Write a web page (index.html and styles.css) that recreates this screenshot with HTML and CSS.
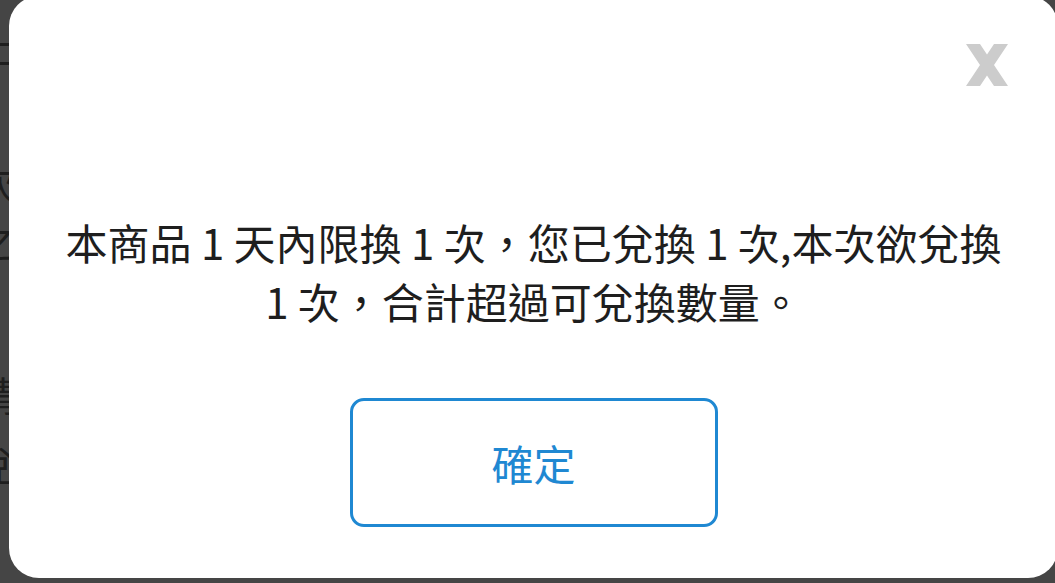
FILE: index.html
```html
<!DOCTYPE html>
<html lang="zh-Hant">
<head>
  <meta charset="UTF-8">
  <meta name="viewport" content="width=device-width, initial-scale=1.0">
  <title>兌換提示</title>
  <link rel="stylesheet" href="styles.css">
</head>
<body>
  <!-- page behind the dimmed overlay -->
  <div class="page">
    <p class="row-1">止</p>
    <p class="row-2">次</p>
    <p class="row-3">之</p>
    <p class="row-4">請</p>
    <p class="row-5">兌</p>
  </div>

  <div class="overlay">
    <div class="modal">
      <button class="close-btn" aria-label="關閉">
        <svg width="42" height="42" viewBox="0 0 42 42">
          <polygon points="0,0 14,0 21,10.5 28,0 42,0 28,21 42,42 28,42 21,31.5 14,42 0,42 14,21" fill="#cccccc"/>
        </svg>
      </button>
      <p class="message">本商品 1 天內限換 1 次，您已兌換 1 次,本次欲兌換 1 次，合計超過可兌換數量。</p>
      <button class="confirm-btn">確定</button>
    </div>
  </div>
</body>
</html>
```

FILE: styles.css
```css
html, body {
  height: 100%;
}
body {
  margin: 0;
  background-color: #454545;
  font-family: "Noto Sans CJK TC", "Noto Sans", sans-serif;
  overflow: hidden;
}
.page {
  margin-left: -24px;
  color: #1e1e1e;
  font-size: 40px;
  line-height: 1;
}
.page p {
  margin: 0;
}
.page .row-1 {
  padding-top: 26px;
}
.page .row-2 {
  margin-top: 96px;
}
.page .row-3 {
  margin-top: 18px;
}
.page .row-4 {
  margin-top: 114px;
}
.page .row-5 {
  margin-top: 30px;
}
.overlay {
  position: absolute;
  inset: 0;
}
.modal {
  position: absolute;
  left: 9px;
  top: -4px;
  width: 1049px;
  height: 582px;
  box-sizing: border-box;
  background-color: #ffffff;
  border-radius: 30px;
  display: flex;
  flex-direction: column;
  align-items: center;
  padding: 48px 50px 0;
}
.close-btn {
  align-self: flex-end;
  background: none;
  border: none;
  padding: 0;
  width: 42px;
  height: 42px;
  cursor: pointer;
}
.close-btn svg {
  display: block;
}
.message {
  margin: 126px 0 0;
  max-width: 949px;
  text-align: center;
  font-size: 42px;
  line-height: 59px;
  color: #1e1e1e;
}
.confirm-btn {
  margin-top: 68px;
  width: 368px;
  height: 129px;
  background-color: #ffffff;
  border: 3px solid #1f88d2;
  border-radius: 14px;
  color: #1f88d2;
  font-family: inherit;
  font-size: 42px;
  cursor: pointer;
}
```
